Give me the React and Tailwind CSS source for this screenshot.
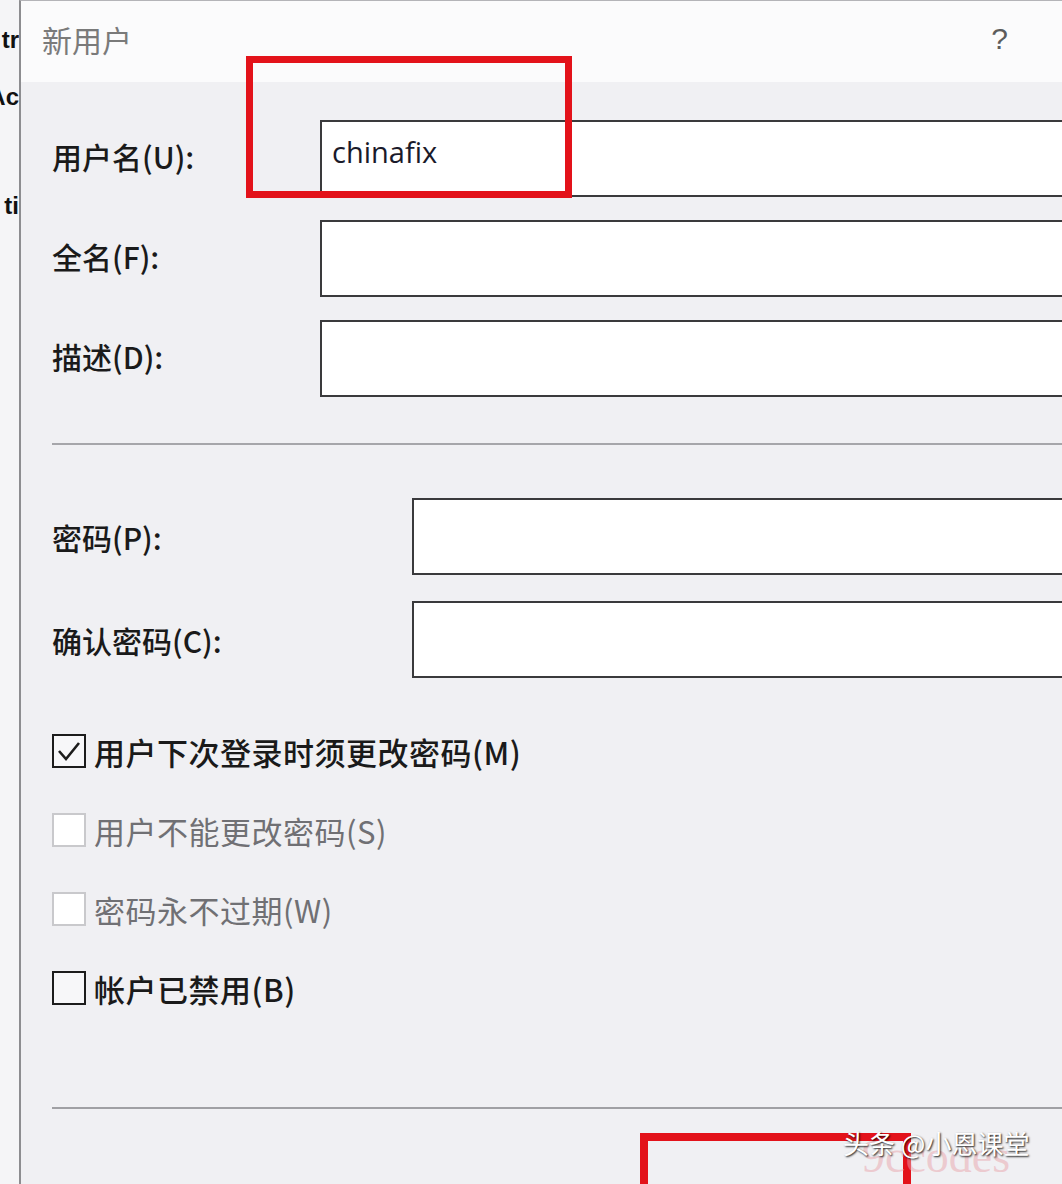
const FIELDS = [
  { label: '用户名(U):', value: 'chinafix' },
  { label: '全名(F):', value: '' },
  { label: '描述(D):', value: '' },
];

const PASSWORDS = ['密码(P):', '确认密码(C):'];

const OPTIONS = [
  { label: '用户下次登录时须更改密码(M)', checked: true, disabled: false },
  { label: '用户不能更改密码(S)', checked: false, disabled: true },
  { label: '密码永不过期(W)', checked: false, disabled: true },
  { label: '帐户已禁用(B)', checked: false, disabled: false },
];

function Checkbox({ checked, disabled }) {
  return (
    <div
      className={`w-[34px] h-[34px] flex-shrink-0 flex items-center justify-center border-2 ${
        disabled ? 'border-[#c9c9cc] bg-white' : 'border-[#1c1c1c] bg-[#f7f7f9]'
      }`}
    >
      {checked && (
        <svg width="26" height="26" viewBox="0 0 26 26">
          <polyline points="3,13 10,21 23,5" fill="none" stroke="#1c1c1c" strokeWidth="2.6" />
        </svg>
      )}
    </div>
  );
}

export default function App() {
  return (
    <div className="relative flex h-[1184px] w-[1062px] overflow-hidden bg-[#f0f0f3] font-['Noto_Sans_CJK_SC',sans-serif]">
      {/* window behind */}
      <div className="w-[19px] flex-shrink-0 bg-[#f5f5f7] overflow-hidden flex flex-col items-end text-[24px] font-bold text-[#111] font-['Liberation_Sans',sans-serif] leading-none">
        <div className="h-[80px] flex items-center whitespace-nowrap">tr</div>
        <div className="h-[34px] flex items-center whitespace-nowrap">Ac</div>
        <div className="h-[184px] flex items-center whitespace-nowrap">ti</div>
      </div>

      {/* dialog */}
      <div className="flex-1 min-w-0 overflow-hidden flex flex-col border-l-2 border-[#8d8d90] border-t border-t-[#b4b4b8]">
        <div className="h-[81px] flex-shrink-0 bg-[#fbfbfc] flex items-center justify-between pl-[21px] pr-[54px]">
          <span className="text-[30px] text-[#7a7a7a] leading-none -mt-[6px]">新用户</span>
          <span className="text-[30px] text-[#5c5c5c] leading-none -mt-[6px] font-['Liberation_Sans',sans-serif]">?</span>
        </div>

        <div className="flex-1 flex flex-col pl-[31px] pt-[38px]">
          <div className="flex flex-col gap-[23px]">
            {FIELDS.map(f => (
              <div key={f.label} className="flex items-center h-[77px]">
                <div className="w-[268px] flex-shrink-0 text-[30px] font-medium text-[#1a1a1a] leading-none -mt-[6px]">{f.label}</div>
                <div className="w-[760px] h-[77px] flex-shrink-0 border-2 border-[#3a3a3c] bg-white pl-[10px] flex items-start pt-[8px]">
                  <span className="text-[29px] text-[#1a1a2a] font-['Open_Sans',sans-serif] leading-[44px]">{f.value}</span>
                </div>
              </div>
            ))}
          </div>

          <div className="mt-[46px] h-[2px] bg-[#a6a6aa]" />

          <div className="mt-[53px] flex flex-col gap-[26px]">
            {PASSWORDS.map(p => (
              <div key={p} className="flex items-center h-[77px]">
                <div className="w-[360px] flex-shrink-0 text-[30px] font-medium text-[#1a1a1a] leading-none">{p}</div>
                <div className="w-[700px] h-[77px] flex-shrink-0 border-2 border-[#3a3a3c] bg-white" />
              </div>
            ))}
          </div>

          <div className="mt-[53px] flex flex-col gap-[39px]">
            {OPTIONS.map(o => (
              <div key={o.label} className="flex items-center h-[40px] gap-[8px]">
                <Checkbox checked={o.checked} disabled={o.disabled} />
                <span
                  className={`text-[31px] leading-none whitespace-nowrap tracking-[0.5px] ${
                    o.disabled ? 'text-[#707074]' : 'text-[#1a1a1a] font-medium'
                  }`}
                >
                  {o.label}
                </span>
              </div>
            ))}
          </div>

          <div className="mt-[99px] h-[2px] bg-[#a0a0a4]" />
        </div>
      </div>

      {/* annotations */}
      <div className="absolute left-[246px] top-[56px] w-[326px] h-[142px] border-[7px] border-[#e3121a]" />
      <div className="absolute left-[640px] top-[1133px] w-[271px] h-[100px] border-[8px] border-[#e3121a]" />

      {/* watermark */}
      <div className="absolute left-[862px] top-[1134px] text-[46px] leading-none text-[#e8a4ac]/50 font-['Liberation_Serif',serif]">
        9ccodes
      </div>
      <div className="absolute left-[843px] top-[1130px] text-[26px] leading-none text-white [text-shadow:1px_1px_2px_rgba(0,0,0,0.9)]">
        头条 @小恩课堂
      </div>
    </div>
  );
}
